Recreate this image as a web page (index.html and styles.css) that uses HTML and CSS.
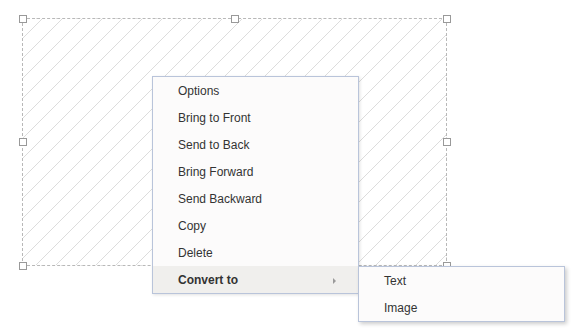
FILE: index.html
```html
<!DOCTYPE html>
<html lang="en">
<head>
    <meta charset="UTF-8">
    <title>Context Menu</title>
    <link rel="stylesheet" href="styles.css">
</head>
<body>
    <div class="canvas">
        <div class="selection">
            <span class="handle h-tl"></span>
            <span class="handle h-tm"></span>
            <span class="handle h-tr"></span>
            <span class="handle h-ml"></span>
            <span class="handle h-mr"></span>
            <span class="handle h-bl"></span>
            <span class="handle h-bm"></span>
            <span class="handle h-br"></span>
        </div>

        <ul class="context-menu">
            <li class="menu-item">Options</li>
            <li class="menu-item">Bring to Front</li>
            <li class="menu-item">Send to Back</li>
            <li class="menu-item">Bring Forward</li>
            <li class="menu-item">Send Backward</li>
            <li class="menu-item">Copy</li>
            <li class="menu-item">Delete</li>
            <li class="menu-item has-sub active">
                Convert to
                <span class="sub-arrow"></span>
                <ul class="context-menu submenu">
                    <li class="menu-item">Text</li>
                    <li class="menu-item">Image</li>
                </ul>
            </li>
        </ul>
    </div>
</body>
</html>
```

FILE: styles.css
```css
html, body {
    margin: 0;
    padding: 0;
    background: #fff;
}
body {
    font-family: "Liberation Sans", Arial, sans-serif;
    font-size: 12px;
    color: #333;
}
.canvas {
    position: relative;
    width: 572px;
    height: 331px;
    overflow: hidden;
}
.selection {
    position: absolute;
    left: 22px;
    top: 18px;
    width: 425px;
    height: 248px;
    box-sizing: border-box;
    border: 1px dashed #b8b8b8;
    background: repeating-linear-gradient(135deg, transparent 0, transparent 13px, #dcdcdc 13px, #dcdcdc 14.14px);
}
.handle {
    position: absolute;
    width: 8px;
    height: 8px;
    box-sizing: border-box;
    border: 1px solid #999;
    background: #fff;
}
.h-tl { left: -4px; top: -4px; }
.h-tm { left: 208px; top: -4px; }
.h-tr { right: -5px; top: -4px; }
.h-ml { left: -4px; top: 119px; }
.h-mr { right: -5px; top: 119px; }
.h-bl { left: -4px; bottom: -5px; }
.h-bm { left: 208px; bottom: -5px; }
.h-br { right: -5px; bottom: -5px; }

.context-menu {
    position: absolute;
    left: 152px;
    top: 76px;
    width: 207px;
    margin: 0;
    padding: 0;
    list-style: none;
    box-sizing: border-box;
    border: 1px solid #b9c4da;
    background: #fcfbfb;
    box-shadow: 1px 1px 3px rgba(0,0,0,0.12);
}
.menu-item {
    position: relative;
    height: 26px;
    line-height: 27px;
    padding-top: 1px;
    padding-left: 25px;
    white-space: nowrap;
    font-weight: normal;
}
.menu-item.active {
    background: #f0efed;
    font-weight: bold;
}
.sub-arrow {
    position: absolute;
    right: 22px;
    top: 12px;
    width: 0;
    height: 0;
    border-left: 3px solid #9a9a9a;
    border-top: 3px solid transparent;
    border-bottom: 3px solid transparent;
}
.submenu {
    left: 205px;
    top: 0;
    font-weight: normal;
    box-shadow: 2px 2px 4px rgba(0,0,0,0.2);
}
```
